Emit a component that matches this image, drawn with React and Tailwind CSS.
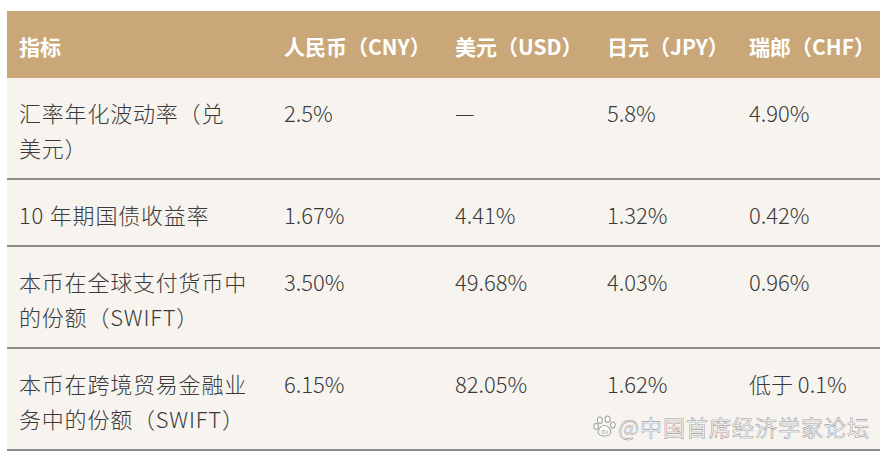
import React from 'react';

const rows = [
	{label: ['汇率年化波动率（兑', '美元）'], cny: '2.5%', usd: '—', jpy: '5.8%', chf: '4.90%'},
	{label: ['10 年期国债收益率'], cny: '1.67%', usd: '4.41%', jpy: '1.32%', chf: '0.42%'},
	{label: ['本币在全球支付货币中', '的份额（SWIFT）'], cny: '3.50%', usd: '49.68%', jpy: '4.03%', chf: '0.96%'},
	{label: ['本币在跨境贸易金融业', '务中的份额（SWIFT）'], cny: '6.15%', usd: '82.05%', jpy: '1.62%', chf: '低于 0.1%'},
];

const headers = ['指标', '人民币（CNY）', '美元（USD）', '日元（JPY）', '瑞郎（CHF）'];

const PawIcon = () => (
	<svg width="23" height="23" viewBox="0 0 22 22" className="shrink-0">
		<g fill="#fff" stroke="#a3a3a3" strokeWidth="1">
			<ellipse cx="6.5" cy="5" rx="2.4" ry="3" />
			<ellipse cx="14" cy="4" rx="2.4" ry="3" />
			<ellipse cx="19" cy="9.5" rx="2.2" ry="2.8" />
			<ellipse cx="3" cy="11" rx="2.2" ry="2.8" />
			<path d="M5.5 18 C3.5 14 8 10 11 10 C14 10 18.5 14 16.5 18 C15 20.8 7 20.8 5.5 18 Z" />
		</g>
		<text x="11" y="18" textAnchor="middle" fontSize="6" fill="#a3a3a3" fontFamily="'Liberation Sans', sans-serif">
			du
		</text>
	</svg>
);

export default function App() {
	return (
		<div className="w-[889px] h-[462px] bg-white pt-[11px] pl-[7px] font-['Noto_Sans_CJK_SC','Noto_Sans',sans-serif]">
			<div className="relative w-[873px]">
				<table className="w-[873px] table-fixed border-collapse bg-[#f7f4ef] text-[#3a3a3a]">
					<colgroup>
						<col className="w-[265px]" />
						<col className="w-[171px]" />
						<col className="w-[152px]" />
						<col className="w-[142px]" />
						<col className="w-[143px]" />
					</colgroup>
					<thead>
						<tr className="bg-[#c9a779] h-[67px]">
							{headers.map((h, i) => (
								<th
									key={i}
									className="pl-3 text-left align-middle text-[21px] font-bold text-white whitespace-nowrap pt-[4px]"
								>
									{h}
								</th>
							))}
						</tr>
					</thead>
					<tbody>
						{rows.map((row, i) => (
							<tr key={i} className="border-b-2 border-[#8e8b86]">
								<td className="pl-3 pt-[17px] pb-[13px] align-top text-[22px] leading-[35px] font-light tracking-[0.8px]">
									{row.label.map((line, j) => (
										<div key={j} className="whitespace-nowrap">
											{line}
										</div>
									))}
								</td>
								{[row.cny, row.usd, row.jpy, row.chf].map((v, j) => (
									<td
										key={j}
										className="pl-3 pt-[17px] pb-[13px] align-top text-[22px] leading-[35px] font-light whitespace-nowrap"
									>
										{v}
									</td>
								))}
							</tr>
						))}
					</tbody>
				</table>
				<div className="absolute right-[10px] bottom-[12px] flex items-center gap-[2px]">
					<PawIcon />
					<span className="text-[22px] leading-[26px] text-white [-webkit-text-stroke:0.6px_#a0a0a0] tracking-[1px]">
						@中国首席经济学家论坛
					</span>
				</div>
			</div>
		</div>
	);
}
